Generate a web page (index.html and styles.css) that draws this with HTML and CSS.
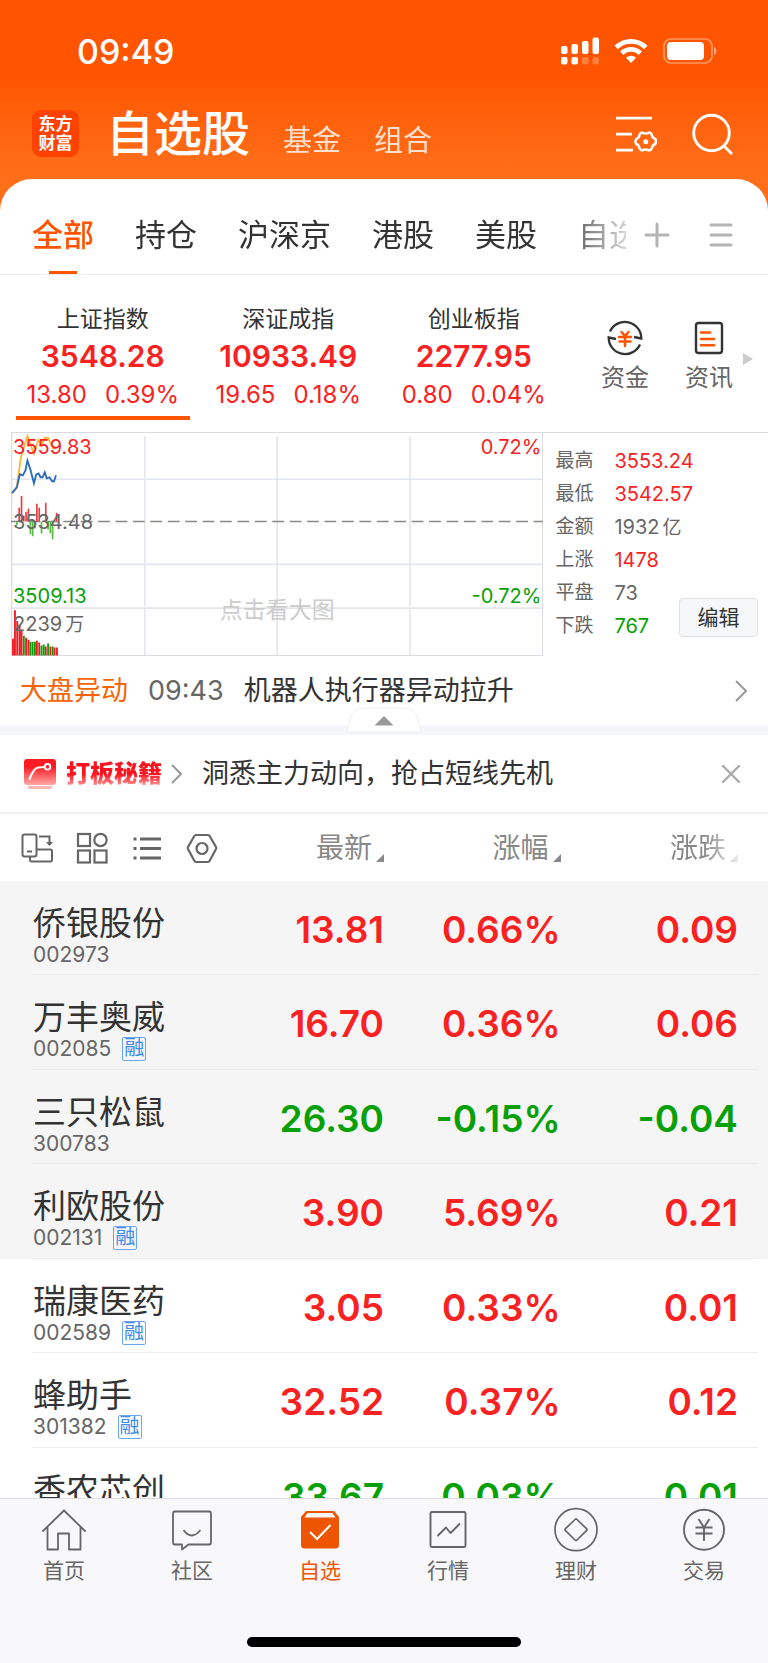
FILE: index.html
```
<!DOCTYPE html>
<html lang="zh-CN">
<head>
<meta charset="utf-8">
<meta name="viewport" content="width=device-width, initial-scale=1">
<title>自选股</title>
<link rel="stylesheet" href="styles.css">
</head>
<body>
<div class="app">
  <div class="status">
    <time class="clock">09:49</time>
    <div class="status-icons">
      <svg width="38" height="28" viewBox="0 0 38 28" fill="#fff"><rect x="0" y="9" width="6.500" height="8" rx="2"/><rect x="10.500" y="7" width="6.500" height="10" rx="2"/><rect x="21" y="4" width="6.500" height="13" rx="2"/><rect x="31.500" y="0.500" width="6.500" height="16.500" rx="2"/><rect x="0" y="20" width="6.500" height="7.500" rx="2"/><rect x="10.500" y="20" width="6.500" height="7.500" rx="2"/><g opacity=".25"><rect x="21" y="20" width="6.500" height="7.500" rx="2"/><rect x="31.500" y="20" width="6.500" height="7.500" rx="2"/></g></svg>
      <svg width="34" height="26" viewBox="0 0 34 26" fill="none" stroke="#fff" stroke-width="4.800"><path d="M2.200 9.500a21 21 0 0 1 29.600 0"/><path d="M7.700 15.300a13.200 13.200 0 0 1 18.600 0"/><path d="M17 25l-5-5.200a7.200 7.200 0 0 1 10 0z" fill="#fff" stroke="none"/></svg>
      <svg width="54" height="26" viewBox="0 0 54 26"><rect x="1" y="1" width="48" height="24" rx="7" fill="none" stroke="#fff" stroke-opacity=".4" stroke-width="1.700"/><rect x="4" y="4" width="37" height="18" rx="4" fill="#fff"/><path d="M51 9c3 1.500 3 6.500 0 8z" fill="#fff" fill-opacity=".5"/></svg>
    </div>
  </div>

  <header class="header">
    <div class="logo"><span>东方</span><span>财富</span></div>
    <nav class="sections">
      <h1 class="title">自选股</h1>
      <a href="#" class="section">基金</a>
      <a href="#" class="section">组合</a>
    </nav>
    <button class="icon-btn" aria-label="管理">
      <svg width="42" height="40" viewBox="0 0 42 40" fill="none" stroke="#fff" stroke-width="2.800"><path d="M0 4.200h36M0 20.200h16M0 36.200h17"/><path stroke-width="2.500" stroke-linejoin="round" d="M26 18.500q3.600 2.200 7.200 0q2.200.3 2.600 2.300q.3 3 3.600 4.200q1.200 3-.2 5q-3 1-3.300 4.200q-1 2-3 2.300q-3.300-2-6.600 0q-2-.5-2.800-2.300q-.4-3.200-3.300-4.200q-1.500-2.300 0-5q3-1.200 3.300-4.200q.6-1.800 2.500-2.300z"/><circle cx="29.800" cy="27.800" r="2.500" fill="#fff" stroke="none"/></svg>
    </button>
    <button class="icon-btn" aria-label="搜索">
      <svg width="42" height="42" viewBox="0 0 42 42" fill="none" stroke="#fff" stroke-width="2.900"><circle cx="19.500" cy="20" r="17.800"/><path d="M31.500 32.500L40 41"/></svg>
    </button>
  </header>

  <main class="card">
    <div class="tabs">
      <nav class="tab-strip">
        <a href="#" class="tab active">全部</a><a href="#" class="tab">持仓</a><a href="#" class="tab">沪深京</a><a href="#" class="tab">港股</a><a href="#" class="tab">美股</a><a href="#" class="tab">自选</a>
      </nav>
      <button class="icon-btn" aria-label="添加分组"><svg width="26" height="26" viewBox="0 0 26 26" stroke="#b4b4b6" stroke-width="3" stroke-linecap="round"><path d="M2 13h22M13 2v22"/></svg></button>
      <button class="icon-btn" aria-label="分组列表"><svg width="24" height="26" viewBox="0 0 24 26" stroke="#b4b4b6" stroke-width="3" stroke-linecap="round"><path d="M2 3h20M2 13h20M2 23h20"/></svg></button>
    </div>

    <section class="indices">
      <a href="#" class="index current"><span class="index-name">上证指数</span><strong>3548.28</strong><span class="change"><span>13.80</span><span>0.39%</span></span></a>
      <a href="#" class="index"><span class="index-name">深证成指</span><strong>10933.49</strong><span class="change"><span>19.65</span><span>0.18%</span></span></a>
      <a href="#" class="index"><span class="index-name">创业板指</span><strong>2277.95</strong><span class="change"><span>0.80</span><span>0.04%</span></span></a>
      <div class="tools">
        <a href="#" class="tool">
          <svg width="36" height="36" viewBox="0 0 36 36" fill="none" stroke="#333" stroke-width="2.300"><path d="M3 11.500A16.400 16.400 0 0 1 34.300 18.500L27 17"/><path d="M33 24.500A16.400 16.400 0 0 1 1.700 17.500L9 19"/><g stroke="#ff5500" stroke-width="2.500" stroke-linecap="round"><path d="M14.500 12l3.500 4 3.500-4M12 17h12M12.500 21.500h11M18 16v10"/></g></svg>
          资金</a>
        <a href="#" class="tool">
          <svg width="36" height="36" viewBox="0 0 36 36" fill="none" stroke="#333" stroke-width="2.400"><rect x="5" y="3" width="26" height="30" rx="2.500"/><path d="M10 12.500h9M10 19h13M10 25.200h13" stroke="#ff5500" stroke-width="2.600" stroke-linecap="round"/></svg>
          资讯</a>
      </div>
      <svg class="more" width="10" height="12" viewBox="0 0 10 12"><path d="M0 0l10 6-10 6z" fill="#ccc"/></svg>
    </section>

    <section class="market">
      <a href="#" class="chart" aria-label="分时图">
        <svg viewBox="0 0 541 227" fill="none">
          <path d="M0 47H541M0 133.500H541M136 3V176M136 179V226M270.500 3V226M405.500 3V176M405.500 179V226" stroke="#e4e6ed" stroke-width="1.600"/>
          <path d="M0 178H541M.7 0V226.300H540.300V0" stroke="#d9dbe1" stroke-width="1.300"/>
          <path d="M0 90H541" stroke="#888" stroke-width="1.500" stroke-dasharray="12 5.700"/>
          <g stroke-width="1.700">
            <path stroke="#ee3a3f" d="M8.300 90V76M10.700 90V64M13 90V84M15.300 90V80M17.700 90V77M26.300 90V72M28.700 90V76M35.300 90V71M46.300 90V81"/>
            <path stroke="#5ab847" d="M6 90V94M19.700 90V103M22 90V105M24.300 90V97M31 90V102M37.700 90V98M40 90V102M42.300 90V108"/>
          </g>
          <g stroke-width="1.900">
            <path stroke="#ee1c25" d="M2 226V209M4 226V180M6.300 226V191M8.700 226V195M10.700 226V201M15.300 226V208M17.700 226V210M26.300 226V211M28.700 226V213M35.300 226V217M40 226V217M44.300 226V218M46.700 226V218"/>
            <path stroke="#0a9f0a" d="M13 226V206M19.700 226V212M22 226V212M24.300 226V212M31 226V216M33.300 226V215M37.700 226V214M42.300 226V217"/>
          </g>
          <path stroke="#fdb42d" stroke-width="1.800" d="M1 61L5.700 56 10 25 13 15 16.700 3 19.700 12 23.300 21 27.700 7 31 13 34.300 5 37.700 5 41 12 43 16 46 14"/>
          <path stroke="#2a6dc0" stroke-width="1.900" d="M1 61L6 55 9 42 12 43 14.700 38 16.700 28 19.700 37 23.300 51 25.700 42 28 41 30 45 32 45 34.300 40 36.300 46 39 45 41.700 49 43.700 49 45.700 43"/>
        </svg>
        <span class="mark high up">3559.83</span><span class="mark high right up">0.72%</span>
        <span class="mark mid">3534.48</span>
        <span class="mark low down">3509.13</span><span class="mark low right down">-0.72%</span>
        <span class="mark vol">2239<span class="unit">万</span></span>
        <span class="hint">点击看大图</span>
      </a>
      <div class="stats">
        <dl class="stat-list">
          <dt>最高</dt><dd class="up">3553.24</dd>
          <dt>最低</dt><dd class="up">3542.57</dd>
          <dt>金额</dt><dd>1932<span class="unit">亿</span></dd>
          <dt>上涨</dt><dd class="up">1478</dd>
          <dt>平盘</dt><dd>73</dd>
          <dt>下跌</dt><dd class="down">767</dd>
        </dl>
        <button class="edit">编辑</button>
      </div>
    </section>

    <a href="#" class="news">
      <span class="news-tag">大盘异动</span><time>09:43</time><span class="news-text">机器人执行器异动拉升</span>
      <svg width="12" height="22" viewBox="0 0 12 22" fill="none" stroke="#999" stroke-width="2"><path d="M1 1l10 10L1 21"/></svg>
    </a>
    <div class="divider">
      <button class="collapse" aria-label="收起">
        <svg width="76" height="26" viewBox="0 0 76 26"><path d="M1 25L4.500 10Q7 1 18 1H58Q69 1 71.500 10L75 25z" fill="#fff" stroke="#eceef0"/><path d="M28.500 18.500L38 9l9.500 9.500z" fill="#999"/></svg>
      </button>
    </div>

    <div class="promo">
      <a href="#" class="promo-link">
        <svg width="32" height="32" viewBox="0 0 32 32" fill="none"><defs><linearGradient id="g" x2="0" y2="1"><stop offset=".3" stop-color="#fb1c26"/><stop offset="1" stop-color="#ffa8a4"/></linearGradient></defs><rect x="0" y="1" width="32" height="26" rx="3" fill="url(#g)"/><path d="M4 28h24v2q-1 1-2 1H6q-1 0-2-1z" fill="#ffb5b5"/><path d="M5.500 21Q10 10 14 9.500T20.500 9" stroke="#fff" stroke-width="2.200" stroke-linecap="round"/><circle cx="23.500" cy="8.800" r="2.800" stroke="#fff" stroke-width="1.900"/></svg>
        <b class="promo-name">打板秘籍</b>
        <svg width="11" height="20" viewBox="0 0 11 20" fill="none" stroke="#999" stroke-width="2"><path d="M1 1l9 9-9 9"/></svg>
        <span class="promo-text">洞悉主力动向，抢占短线先机</span>
      </a>
      <button class="icon-btn" aria-label="关闭"><svg width="20" height="20" viewBox="0 0 20 20" stroke="#aaa" stroke-width="2.400" stroke-linecap="round"><path d="M2 2l16 16M18 2L2 18"/></svg></button>
    </div>

    <div class="list">
      <table class="stocks">
        <thead>
          <tr>
            <th class="first">
              <div class="views">
                <button class="icon-btn" aria-label="横屏"><svg width="32" height="32" viewBox="0 0 32 32" fill="none" stroke="#666" stroke-width="2"><rect x="1.500" y="2.500" width="14" height="22" rx="2"/><path d="M6 19.500h5M9 25v3q0 1.500 2 1.500h18.500q1.500 0 1.500-2V19q0-1.500-2-1.500H16M18 4.500h10.500V13"/><path d="M25 10h7l-3.500 4z" fill="#666" stroke="none"/></svg></button>
                <button class="icon-btn" aria-label="宫格"><svg width="32" height="32" viewBox="0 0 32 32" fill="none" stroke="#666" stroke-width="2.200"><rect x="2" y="2" width="12" height="12"/><circle cx="24.500" cy="8" r="6.200"/><rect x="2" y="18.500" width="12" height="12"/><rect x="18.500" y="18.500" width="12" height="12"/></svg></button>
                <button class="icon-btn" aria-label="列表"><svg width="32" height="32" viewBox="0 0 32 32" fill="none" stroke="#666" stroke-width="2.900"><path d="M9 7h21M9 16.500h21M9 26h21M2.500 7h3M2.500 16.500h3M2.500 26h3"/></svg></button>
                <button class="icon-btn" aria-label="设置"><svg width="32" height="32" viewBox="0 0 32 32" fill="none" stroke="#666" stroke-width="2.200" stroke-linejoin="round"><path d="M10 3h12q1 0 1.800 1.200L30 15q.5 1 0 2l-6.200 11.500Q23 30 22 30H10q-1 0-1.800-1.500L2 17q-.5-1 0-2L8.200 4.200Q9 3 10 3z"/><circle cx="16" cy="16.500" r="5.500"/></svg></button>
              </div>
            </th>
            <th><button class="sort">最新</button></th>
            <th><button class="sort">涨幅</button></th>
            <th><button class="sort fade">涨跌</button></th>
          </tr>
        </thead>
        <tbody>
          <tr class="pinned up"><td class="first" colspan="1"><a href="#" class="name">侨银股份</a><div class="code">002973</div></td><td>13.81</td><td>0.66%</td><td>0.09</td></tr>
          <tr class="pinned up"><td class="first"><a href="#" class="name">万丰奥威</a><div class="code">002085<span class="badge">融</span></div></td><td>16.70</td><td>0.36%</td><td>0.06</td></tr>
          <tr class="pinned down"><td class="first"><a href="#" class="name">三只松鼠</a><div class="code">300783</div></td><td>26.30</td><td>-0.15%</td><td>-0.04</td></tr>
          <tr class="pinned up"><td class="first"><a href="#" class="name">利欧股份</a><div class="code">002131<span class="badge">融</span></div></td><td>3.90</td><td>5.69%</td><td>0.21</td></tr>
          <tr class="up"><td class="first"><a href="#" class="name">瑞康医药</a><div class="code">002589<span class="badge">融</span></div></td><td>3.05</td><td>0.33%</td><td>0.01</td></tr>
          <tr class="up"><td class="first"><a href="#" class="name">蜂助手</a><div class="code">301382<span class="badge">融</span></div></td><td>32.52</td><td>0.37%</td><td>0.12</td></tr>
          <tr class="down"><td class="first"><a href="#" class="name">香农芯创</a></td><td>33.67</td><td>0.03%</td><td>0.01</td></tr>
        </tbody>
      </table>
    </div>
  </main>

  <footer class="bottom">
    <nav class="bar">
      <a href="#" class="bar-item"><svg width="46" height="46" viewBox="0 0 46 46" fill="none" stroke="#666" stroke-width="1.800" stroke-linejoin="round"><path d="M1.500 24.500L23 3.500l21.500 21M6.500 20v22.500H17V26.500h11v16h11.500V20"/></svg>首页</a>
      <a href="#" class="bar-item"><svg width="46" height="46" viewBox="0 0 46 46" fill="none" stroke="#666" stroke-width="1.800" stroke-linejoin="round"><path d="M6 4.500h34q2 0 2 2v29q0 2-2 2H19.500l-6.500 5v-5H6q-2 0-2-2v-29q0-2 2-2z"/><path d="M14.500 23q8 11 17 0"/></svg>社区</a>
      <a href="#" class="bar-item on"><svg width="46" height="46" viewBox="0 0 46 46" fill="none"><path d="M9 4h28l5 6v28q0 3.500-3.500 3.500h-31Q4 41.500 4 38V10z" fill="#ee5500"/><path d="M10.500 6h25l3 4.500h-31z" fill="#f8f8fa"/><path d="M13 25l7 7 13.500-14" stroke="#fff" stroke-width="2"/></svg>自选</a>
      <a href="#" class="bar-item"><svg width="46" height="46" viewBox="0 0 46 46" fill="none" stroke="#666" stroke-width="1.900" stroke-linejoin="round"><rect x="5.500" y="5" width="35" height="35" rx="1.500"/><path d="M12.500 29l8.500-8.500 4.500 5.500 9.500-9.500"/></svg>行情</a>
      <a href="#" class="bar-item"><svg width="46" height="46" viewBox="0 0 46 46" fill="none" stroke="#666" stroke-width="1.700" stroke-linejoin="round"><circle cx="23" cy="22.700" r="21"/><path d="M22 12.500q1-1 2 0l9.500 9.200q1 1 0 2L24 33q-1 1-2 0l-9.500-9.300q-1-1 0-2z"/></svg>理财</a>
      <a href="#" class="bar-item"><svg width="46" height="46" viewBox="0 0 46 46" fill="none" stroke="#666" stroke-width="1.900"><circle cx="23" cy="22.700" r="20"/><path d="M17.500 12l5.500 8.500 5.500-8.500M14.500 20.500h17M14.500 26.500h17M23 20.500v13.500"/></svg>交易</a>
    </nav>
    <div class="home-line"></div>
  </footer>
</div>
</body>
</html>
```
FILE: styles.css
```
* { box-sizing: border-box; }
body, h1, dl, dd { margin: 0; }
body {
  font-family: Inter, "Noto Sans CJK SC", sans-serif;
  color: #333;
  background: #fff;
}
a { color: inherit; text-decoration: none; }
button { font: inherit; color: inherit; background: none; border: 0; padding: 0; }
svg { display: block; flex: none; }
.up { color: #f92222; }
.down { color: #07a007; }
.icon-btn { flex: none; }

.app {
  display: flex;
  flex-direction: column;
  height: 100vh;
  background: linear-gradient(#ff5500 75px, #ff6d18 165px, #ff701d 230px);
}

.status {
  flex: none;
  display: flex;
  align-items: center;
  justify-content: space-between;
  height: 102px;
  padding: 0 51px 0 77px;
  color: #fff;
}
.clock { font-size: 34px; font-weight: 500; }
.status-icons { display: flex; align-items: center; gap: 15px; }

.header {
  flex: none;
  display: flex;
  align-items: center;
  gap: 34px;
  height: 77px;
  padding: 0 34px 14px 32px;
  color: #fff;
}
.logo {
  display: flex;
  flex-direction: column;
  align-items: center;
  justify-content: center;
  width: 47px;
  height: 47px;
  border-radius: 9px;
  background: #ff4200;
  font-size: 17px;
  line-height: 19px;
  font-weight: 700;
}
.sections { flex: 1; display: flex; align-items: baseline; gap: 33px; margin-left: -7px; }
.title { font-size: 48px; line-height: 64px; font-weight: 500; }
.section { font-size: 29px; opacity: .8; }

.card {
  flex: 1;
  display: flex;
  flex-direction: column;
  min-height: 0;
  border-radius: 32px 32px 0 0;
  background: #fff;
}
.tabs {
  flex: none;
  display: flex;
  align-items: center;
  gap: 39px;
  height: 96px;
  padding: 16px 35px 0 32px;
  border-bottom: 1px solid #ececee;
}
.tab-strip {
  flex: 1;
  display: flex;
  gap: 41px;
  align-self: stretch;
  min-width: 0;
  overflow: hidden;
  margin-right: -21px;
  mask-image: linear-gradient(90deg, #000 88%, transparent 103%);
}
.tab {
  flex: none;
  display: flex;
  flex-direction: column;
  justify-content: space-between;
  align-items: center;
  font-size: 31px;
  line-height: 79px;
}
.tab.active {
  color: #ff5500;
  font-weight: 500;
  background: linear-gradient(#ff5500, #ff5500) no-repeat 50% 100% / 28px 3px;
}

.indices { flex: none; display: flex; align-items: flex-start; height: 157px; padding: 27px 15px 12px 16px; }
.index {
  flex: 173 1 0;
  display: flex;
  flex-direction: column;
  align-items: center;
  margin-right: 12px;
  padding-bottom: 3px;
  border-bottom: 4px solid transparent;
}
.index.current { border-color: #ff5500; }
.index-name { font-size: 23px; line-height: 34px; }
.index strong { font-size: 30px; line-height: 41px; font-weight: 600; color: #f92222; }
.change { display: flex; gap: 18px; font-size: 24px; line-height: 36px; color: #f92222; white-space: nowrap; }
.tools { flex: 160 1 0; display: flex; align-items: flex-start; justify-content: flex-end; gap: 36px; padding-top: 18px; margin-right: 10px; }
.tool { display: flex; flex-direction: column; align-items: center; gap: 4px; font-size: 24px; line-height: 36px; color: #666; }
.more { align-self: center; margin-bottom: 4px; }

.market { flex: none; display: flex; margin-left: 11px; border-top: 1px solid #d9dbe1; }
.chart { position: relative; flex: 541 1 0; }
.chart svg { width: 100%; height: auto; }
.mark { position: absolute; left: 2px; font-size: 20px; line-height: 24px; }
.mark.right { left: auto; right: 2px; }
.high { top: 2px; }
.mid { top: 77px; color: #666; }
.low { top: 151px; }
.vol { top: 179px; color: #666; }
.hint { position: absolute; top: 161px; left: 0; right: 0; text-align: center; font-size: 23px; line-height: 32px; color: #ccc; }
.unit { margin-left: 3px; font-size: 19px; }
.stats { position: relative; flex: 216 1 0; padding: 12px 0 14px 12px; }
.stat-list { display: grid; grid-template-columns: 59px 1fr; grid-auto-rows: 1fr; align-items: center; height: 100%; font-size: 20px; line-height: 24px; color: #666; }
.stat-list dt { font-size: 19px; }
.stat-list .up { color: #f92222; }
.stat-list .down { color: #07a007; }
.edit {
  position: absolute;
  right: 10px;
  bottom: 19px;
  width: 79px;
  height: 39px;
  border: 1px solid #dfe1e6;
  border-radius: 4px;
  background: #f6f7f9;
  font-size: 21px;
  line-height: 30px;
  color: #333;
}

.news { flex: none; display: flex; align-items: center; height: 69px; padding: 0 21px 0 20px; font-size: 27px; line-height: 40px; }
.news-tag { color: #f56407; }
.news time { margin: 0 20px; color: #666; }
.news-text { flex: 1; }
.divider { flex: none; position: relative; height: 10px; background: #f5f6f9; }
.collapse { position: absolute; left: 50%; bottom: 2px; width: 76px; margin-left: -38px; }

.promo { flex: none; display: flex; align-items: center; height: 79px; padding: 0 27px 0 24px; border-bottom: 2px solid #f2f2f3; }
.promo-link { flex: 1; display: flex; align-items: center; font-size: 27px; line-height: 40px; }
.promo-name {
  margin: 0 9px 0 10px;
  font-size: 24px;
  font-weight: 900;
  background: linear-gradient(#fb1420 50%, #ffb0ae 85%);
  background-clip: text;
  color: transparent;
}
.promo-text { margin-left: 20px; }

.list { flex: 1; min-height: 0; overflow: hidden; }
.stocks { width: 100%; table-layout: fixed; border-collapse: collapse; }
.stocks th, .stocks td { padding: 0; text-align: right; }
.stocks thead tr { height: 67px; }
.stocks .first { width: 27%; text-align: left; }
.stocks th:nth-child(2), .stocks th:nth-child(3) { width: 23%; }
.stocks th:last-child, .stocks td:last-child { padding-right: 30px; }
.views { display: flex; gap: 23px; padding-left: 21px; }
.sort { display: inline-flex; align-items: center; gap: 4px; font-size: 28px; line-height: 40px; font-weight: 400; color: #888; }
.sort::after { content: ""; align-self: flex-end; margin-bottom: 6px; border: 4px solid; border-color: transparent #888 #888 transparent; }
.fade { mask-image: linear-gradient(90deg, #000 50%, transparent 110%); }

.stocks tbody tr {
  height: 94px;
  background: linear-gradient(#ececee, #ececee) no-repeat 32px 100% / calc(100% - 42px) 1px;
}
.stocks tbody tr:nth-child(even) { height: 95px; }
.stocks tbody .pinned { background-color: #f5f5f5; }
.stocks td { font-size: 37px; line-height: 48px; font-weight: 600; white-space: nowrap; vertical-align: top; padding-top: 25px; }
.stocks td.first { padding: 22px 0 0 33px; font-weight: 400; color: #333; }
.name { display: block; font-size: 33px; line-height: 40px; }
.code { display: flex; align-items: center; gap: 11px; font-size: 21px; line-height: 24px; color: #666; }
.badge { width: 24px; height: 24px; border: 1px solid #6ba6f0; border-radius: 2px; font-size: 20px; line-height: 21px; text-align: center; color: #3e8bea; }

.bottom { flex: none; height: 165px; border-top: 1px solid #dcdde0; background: #f8f8fa; }
.bar { display: flex; padding-top: 8px; }
.bar-item { flex: 1; display: flex; flex-direction: column; align-items: center; gap: 3px; font-size: 21px; line-height: 30px; color: #666; }
.bar-item.on { color: #ee5500; }
.home-line { width: 274px; height: 10px; margin: 51px auto 0; border-radius: 5px; background: #000; }
```
